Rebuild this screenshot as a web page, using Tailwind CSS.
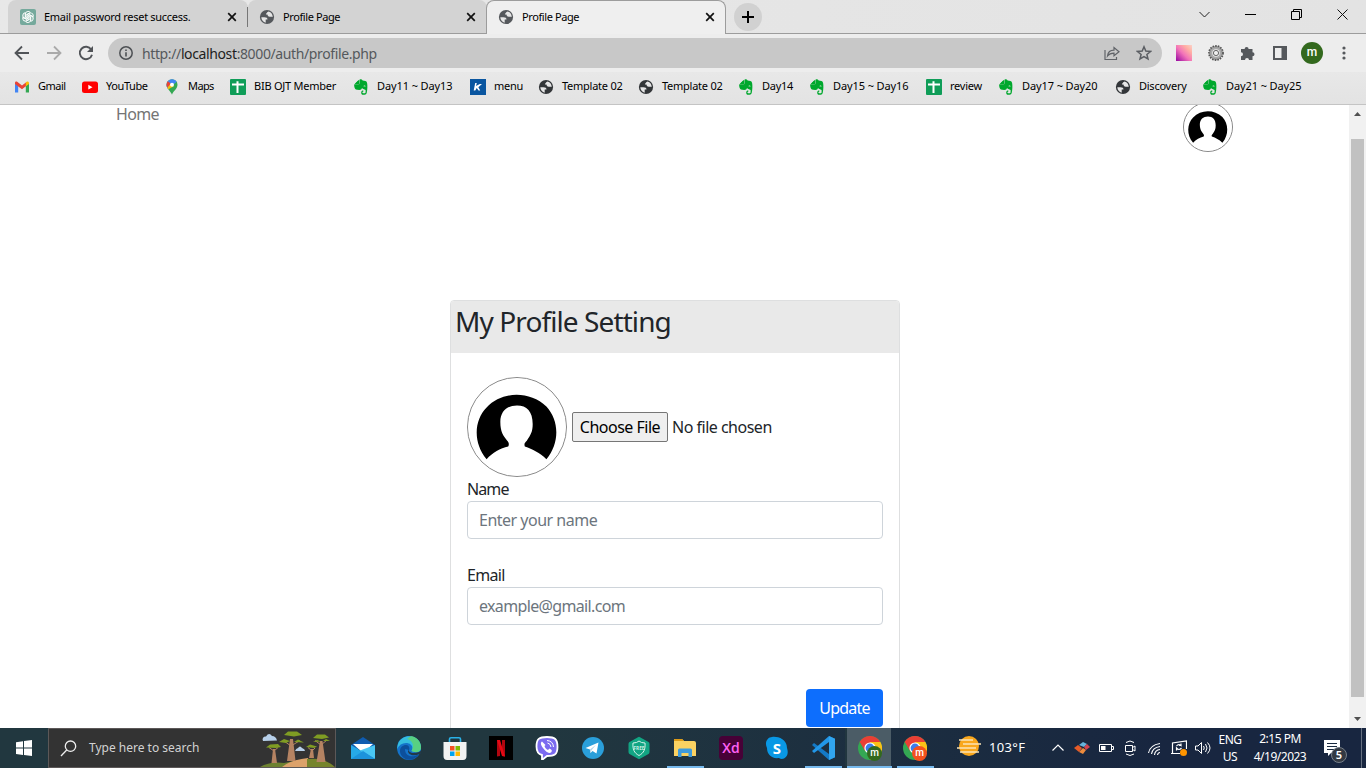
<!DOCTYPE html>
<html lang="en">
<head>
<meta charset="utf-8">
<title>Profile Page</title>
<script src="https://cdn.jsdelivr.net/npm/@tailwindcss/browser@4"></script>
</head>
<body class="w-[1366px] h-[768px] overflow-hidden flex flex-col bg-white font-['Noto_Sans','Open_Sans',sans-serif] text-[#212529]">
<svg class="hidden">
  <symbol id="globe" viewBox="0 0 16 16"><circle cx="8" cy="8" r="7.1" fill="currentColor"/><path d="M9.500 2.200C7.500 2.600 7.600 3.800 8.600 4.300L7.800 5.600 9.300 6.900C10.600 7.600 12 7.400 13.900 7.200 14 9.500 12.800 11.500 11 12.800 9.600 13.500 8.300 13.700 7.200 13.700L7 11.900C8 11 9.500 11.400 9.400 10 9.300 8.600 7.800 8.300 6.200 8.300H2.200C2 5.600 3.400 3.600 5.200 2.700 6.500 2.100 8 1.900 9.500 2.200Z" fill="#e6e6e6" opacity=".0"/><path d="M2.300 8.200H5.400C7.600 8.200 8.500 9 8.500 10.400H6.700V13.700C4.300 13.200 2.400 11 2.300 8.200ZM9.600 2.500C12.200 3.200 13.800 5.400 13.700 8 12.800 7.400 11.800 7.700 10.700 7.700 9.200 7.600 8.500 6.700 8.500 5.600H6.900C6.900 4 8.200 4 8.200 3.200Z" fill="#e6e6e6"/></symbol>
  <symbol id="ever" viewBox="0 0 16 16"><path d="M5.6.9V4.2Q5.6 4.8 5 4.8H1.9L5.6.9ZM6.4 1.3Q6.4.3 7.4.3C8.8.3 9.3.9 9.6 1.6L12.5 2Q14 2.2 14.2 4.6C14.5 7.4 14.5 10 13.8 13.6 13.5 15.3 12.7 15.8 11.6 15.8H10.3C8.8 15.8 8.2 14.8 8.2 13.7 8.2 12.2 9 11.6 10.3 11.6V12.8C9.6 12.8 9.4 13.2 9.4 13.6 9.4 14.1 9.7 14.3 10.3 14.3H11.5C12.3 14.3 12.6 13.8 12.6 13V11C12.4 10.4 9.6 10.4 9 9 8.7 10.3 8 10.9 6.3 10.9 3 10.9 2.1 10.3 1.6 8.7 1.2 7.3 1.1 6.4 1.2 5.5H5.2Q6.4 5.5 6.4 4.3Z" fill="#00a82d"/><path d="M1.200 5.600 6 1V5.600Z" fill="#00a82d"/><path d="M10.4 7.3c.2-1.2 2-1.2 2.2.2Z" fill="#e6e6e6"/></symbol>
  <symbol id="sheet" viewBox="0 0 16 16"><rect width="16" height="16" rx="1" fill="#0f9d58"/><path d="M2 5.5H14M7.5 2.2V14" stroke="#fff" stroke-width="2"/></symbol>
  <symbol id="close" viewBox="0 0 10 10"><path d="M1.2 1.2 8.8 8.8M8.8 1.2 1.2 8.8" stroke="#111" stroke-width="1.7"/></symbol>
  <symbol id="person" viewBox="0 0 100 100"><circle cx="50" cy="50" r="49.5" fill="#fff"/><path d="M19 83C5 66 6 43 19 30 35 13 63 13 80 29 93 43 94 66 80 83 73 76 66 73 58 70 57 67 58 66 60 64 64 58 66 55 66 47 66 34 60 28 50 28S33 34 33 45C33 55 36 59 40 64 42 66 42 68 41 70 33 72 25 76 19 83Z" fill="#000"/></symbol>
  <symbol id="chrome" viewBox="0 0 24 24"><circle cx="12" cy="12" r="12" fill="#34a853"/><path d="M12 12 1.6 6A12 12 0 0 1 22.4 6Z" fill="#ea3f35"/><path d="M12 6H22.4A12 12 0 0 1 12 24L17.2 15Z" fill="#fbc116"/><path d="M1.6 6 6.8 15 12 12 12 6Z" fill="#ea3f35"/><path d="M1.6 6 6.8 15 9 17 4 17Z" fill="#34a853"/><circle cx="12" cy="12" r="5.6" fill="#fff"/><circle cx="12" cy="12" r="4.4" fill="#3b7ded"/></symbol>
</svg>

<!-- Tab strip -->
<header class="h-[34px] shrink-0 flex bg-linear-to-r from-[#e8e8e8] to-[#e3e3e3] text-[11px] text-black relative border-b border-[#9c9c9c]">
  <div class="ml-2 w-[240px] h-[33px] bg-[#d3d3d3] rounded-t-lg flex items-center pl-3 pr-[11px] pt-px">
    <svg class="size-4 shrink-0" viewBox="0 0 16 16"><rect width="16" height="16" rx="2" fill="#75a99c"/><g fill="none" stroke="#fff" stroke-width=".9"><path id="petal" d="M5.4 8.8V5.2Q5.4 2.6 8 2.4 9.6 2.4 10.3 3.5L7 5.4V8.8"/><use href="#petal" transform="rotate(60 8 8)"/><use href="#petal" transform="rotate(120 8 8)"/><use href="#petal" transform="rotate(180 8 8)"/><use href="#petal" transform="rotate(240 8 8)"/><use href="#petal" transform="rotate(300 8 8)"/></g></svg>
    <span class="ml-2 flex-1 whitespace-nowrap tracking-[-0.3px]">Email password reset success.</span>
    <svg class="size-[10px]"><use href="#close"/></svg>
  </div>
  <div class="w-[239px] h-[33px] bg-[#d3d3d3] rounded-t-lg flex items-center pl-[11px] pr-[11px] pt-px">
    <svg class="size-4 text-[#55585c]"><use href="#globe"/></svg>
    <span class="ml-2 flex-1 tracking-[-0.4px]">Profile Page</span>
    <svg class="size-[10px]"><use href="#close"/></svg>
  </div>
  <i class="absolute left-[247px] top-[7px] w-px h-5 bg-[#777]"></i>
  <div class="-ml-[1px] w-[240px] h-[34px] bg-[#efefef] rounded-t-lg border border-b-0 border-[#9c9c9c] flex items-center pl-[11px] pr-[10px] pb-px">
    <svg class="size-4 text-[#55585c]"><use href="#globe"/></svg>
    <span class="ml-2 flex-1 tracking-[-0.4px]">Profile Page</span>
    <svg class="size-[10px]"><use href="#close"/></svg>
  </div>
  <div class="ml-2 mt-[3px] size-7 rounded-full bg-[#d1d1d1] flex items-center justify-center"><svg class="size-3" viewBox="0 0 12 12"><path d="M6 0V12M0 6H12" stroke="#000" stroke-width="2"/></svg></div>
  <div class="ml-auto flex items-center pr-[18px] pb-[5px] gap-[35px]">
    <svg class="size-[11px]" viewBox="0 0 11 11" fill="none" stroke="#222"><path d="M.5 3 5.5 8 10.5 3"/></svg>
    <svg class="size-[11px]" viewBox="0 0 11 11" stroke="#000"><path d="M0 5.500H11"/></svg>
    <svg class="size-[11px]" viewBox="0 0 11 11" fill="none" stroke="#000"><path d="M.5 2.500H8.500V10.500H.5ZM2.500 2.500V.5H10.500V8.500H8.500"/></svg>
    <svg class="size-[11px]" viewBox="0 0 11 11" stroke="#111"><path d="M.5.5 10.500 10.500M10.500.5.5 10.500"/></svg>
  </div>
</header>

<!-- Toolbar -->
<div class="h-[38px] shrink-0 flex items-center bg-[#ededed] pl-[14px] pr-[13px]">
  <svg class="size-4" viewBox="0 0 16 16" fill="none" stroke="#515458" stroke-width="1.8"><path d="M15 8H2M8 1.500 1.500 8 8 14.500"/></svg>
  <svg class="size-4 ml-4" viewBox="0 0 16 16" fill="none" stroke="#aaa" stroke-width="1.800"><path d="M1 8H14M8 1.500 14.500 8 8 14.500"/></svg>
  <svg class="size-4 ml-4" viewBox="0 0 16 16"><path d="M13.200 4.500A6.200 6.200 0 1 0 14 9.700" fill="none" stroke="#515458" stroke-width="1.900"/><path d="M15 1V7H9Z" fill="#515458"/></svg>
  <div class="ml-[14px] w-[1054px] h-[30px] rounded-full bg-[#c8c8c8] flex items-center pl-[11px] pr-[10px]">
    <svg class="size-[14px]" viewBox="0 0 14 14"><circle cx="7" cy="7" r="6.200" fill="none" stroke="#4d5054" stroke-width="1.500"/><path d="M7 6.200V10.500M7 3.500V5" stroke="#4d5054" stroke-width="1.600"/></svg>
    <span class="ml-[9px] text-[14px] text-[#55585c] flex-1 tracking-[-0.38px]">http://<span class="text-[#1d1e20]">localhost</span>:8000/auth/profile.php</span>
    <svg class="size-4 mr-4" viewBox="0 0 16 16" fill="none" stroke="#606368" stroke-width="1.200"><path d="M1 5V14.500H12.500V12M3.500 11C4 7 6.500 5.200 10 5.200V2.500L15 6.700 10 10.800V8.200C7 8.200 5 9 3.500 11Z"/></svg>
    <svg class="size-4" viewBox="0 0 16 16" fill="none" stroke="#5b5e63" stroke-width="1.500"><path d="M8 1.800 9.800 6.100 14.500 6.500 10.900 9.500 12 14 8 11.600 4 14 5.100 9.500 1.500 6.500 6.200 6.100Z"/></svg>
  </div>
  <div class="ml-[14px] size-4 bg-[linear-gradient(45deg,#a012a4_5%,#f374b9_45%,#ffb0a4_75%,#fad2c9)]"></div>
  <svg class="size-4 ml-4" viewBox="0 0 16 16" fill="none"><circle cx="8" cy="8" r="7" stroke="#555" stroke-width="1.800" stroke-dasharray="1.600 1.060"/><circle cx="8" cy="8" r="5" stroke="#aaa" stroke-width="2.600" fill="#eee"/><circle cx="8" cy="8" r="6.400" stroke="#555" stroke-width=".6"/><circle cx="8" cy="8" r="2.600" stroke="#666"/></svg>
  <svg class="size-4 ml-4" viewBox="0 0 16 16" fill="#55585c"><path d="M1 4H4.600A2 2 0 1 1 8.600 4H12.500V7.200A2 2 0 1 1 12.500 11.200V15H9A2 2 0 0 0 5 15H1V11.300A2 2 0 0 0 1 7.300Z"/></svg>
  <svg class="size-4 ml-4" viewBox="0 0 16 16"><path d="M1 1H15V15H1ZM3 3V13H9.500V3Z" fill="#55585c" fill-rule="evenodd"/></svg>
  <div class="ml-[13px] size-[22px] rounded-full bg-[#33691e] text-white text-[12px] leading-[20px] text-center font-['Roboto'] font-medium">m</div>
  <svg class="w-1 h-[14px] ml-[19px]" viewBox="0 0 4 14" fill="#55585c"><circle cx="2" cy="2" r="1.600"/><circle cx="2" cy="7" r="1.600"/><circle cx="2" cy="12" r="1.600"/></svg>
</div>

<!-- Bookmarks -->
<nav class="h-[33px] shrink-0 bg-linear-to-b from-[#e8e8e8] to-[#e3e3e3] border-b border-[#c4c4c4] pl-[14px] pb-[3px] grid grid-cols-[68px_82px_66px_123px_117px_68px_100px_100px_71px_117px_72px_117px_87px_110px] items-center text-[11px] text-black tracking-[-0.25px] whitespace-nowrap [&>a]:flex [&>a]:items-center [&>a]:gap-2 [&_svg]:size-4 [&_svg]:shrink-0">
  <a class="tracking-[-0.5px]"><svg viewBox="0 0 16 16"><path d="M1 13.500V4.500L4.200 6.800V13.500Z" fill="#4285f4"/><path d="M11.800 13.500V6.800L15 4.500V13.500Z" fill="#34a853"/><path d="M1 5V4C1 2.500 2.500 2.200 3.500 3L8 6.400 12.200 3.200V7L8 10.200 3.600 7Z" fill="#ea4335"/><path d="M11.800 3.400C13 2 15 2.500 15 4.200V5L11.800 7.300Z" fill="#fbbc04"/></svg>Gmail</a>
  <a class="tracking-[-0.4px]"><svg viewBox="0 0 16 16"><rect y="2.500" width="16" height="11.500" rx="2.500" fill="#f00"/><path d="M6.300 5.800 10.500 8.200 6.300 10.600Z" fill="#fff"/></svg>YouTube</a>
  <a class="tracking-[-0.6px]"><svg viewBox="0 0 16 16"><path d="M8 15.800C7.500 13 2.500 10 2.500 5.700A5.500 5.500 0 0 1 13.500 5.700C13.500 10 8.600 12.500 8 15.800Z" fill="#34a853"/><path d="M3.800 2.200A5.500 5.500 0 0 1 12.700 2.800L4.200 10C3.200 8.700 2.500 7.500 2.500 5.700Z" fill="#4285f4"/><path d="M3.800 2.200 7 4.800 3.200 8.500C2.300 6.500 2.200 4 3.800 2.200Z" fill="#ea4335"/><path d="M9.800 7.200 4.300 10.200 3.300 8.700 6.500 4.900Z" fill="#fbbc04"/><circle cx="8" cy="5.700" r="2" fill="#fff"/></svg>Maps</a>
  <a><svg><use href="#sheet"/></svg>BIB OJT Member</a>
  <a class="tracking-[-0.1px]"><svg><use href="#ever"/></svg>Day11 ~ Day13</a>
  <a><svg viewBox="0 0 16 16"><rect width="16" height="16" fill="#0a56a0"/><path d="M5.200 4H6.800L6 7 9.800 5H12L8.400 8.200 10.200 11.500H8.500L6.700 9 5.300 11.500H3.700Z" fill="#fff"/></svg>menu</a>
  <a><svg class="text-[#333639]"><use href="#globe"/></svg>Template 02</a>
  <a><svg class="text-[#333639]"><use href="#globe"/></svg>Template 02</a>
  <a><svg><use href="#ever"/></svg>Day14</a>
  <a class="tracking-[-0.1px]"><svg><use href="#ever"/></svg>Day15 ~ Day16</a>
  <a><svg><use href="#sheet"/></svg>review</a>
  <a class="tracking-[-0.1px]"><svg><use href="#ever"/></svg>Day17 ~ Day20</a>
  <a><svg class="text-[#333639]"><use href="#globe"/></svg>Discovery</a>
  <a class="tracking-[-0.1px]"><svg><use href="#ever"/></svg>Day21 ~ Day25</a>
</nav>

<!-- Page -->
<div class="h-[623px] shrink-0 flex overflow-hidden">
  <main class="flex-1 h-full overflow-hidden flex flex-col">
    <div class="h-[195px] shrink-0 flex justify-between items-start pl-[116px] pr-[116px]">
      <a class="text-[16px] leading-[18px] text-[#747474] tracking-[-0.7px]">Home</a>
      <svg class="size-[50px] -mt-[3px] rounded-full border border-[#888]" viewBox="0 0 100 100"><use href="#person"/></svg>
    </div>
    <section class="ml-[450px] w-[450px] h-[500px] shrink-0 border border-[#dedfe0] rounded-[4px] overflow-hidden">
      <h1 class="h-[52px] bg-[#e9e9e9] pl-[4px] pt-[3px] text-[28px] leading-[34px] tracking-[-0.9px] whitespace-nowrap">My Profile Setting</h1>
      <form class="px-4 pt-6 flex flex-col text-[16px] leading-6 tracking-[-0.5px]">
        <div class="flex items-center">
          <svg class="size-[100px] rounded-full border border-[#888]" viewBox="0 0 100 100"><use href="#person"/></svg>
          <span class="ml-[5px] w-24 h-[30px] border border-[#767676] rounded-[2px] bg-[#efefef] text-black flex items-center justify-center whitespace-nowrap">Choose File</span>
          <span class="ml-1 whitespace-nowrap">No file chosen</span>
        </div>
        <label class="tracking-[-0.9px]">Name</label>
        <div class="h-[38px] border border-[#ced4da] rounded-[4px] px-[11px] flex items-center text-[#6c757d]">Enter your name</div>
        <label class="mt-6 tracking-[-0.7px]">Email</label>
        <div class="h-[38px] border border-[#ced4da] rounded-[4px] px-[11px] flex items-center text-[#6c757d] tracking-[-0.65px]">example@gmail.com</div>
        <div class="mt-16 self-end w-[77px] h-[38px] rounded-[4px] bg-[#0d6efd] text-white flex items-center justify-center tracking-[-0.8px]">Update</div>
      </form>
    </section>
  </main>
  <div class="w-[17px] bg-[#f1f1f1] flex flex-col items-center py-[7px]">
    <svg class="w-[7px] h-1" viewBox="0 0 7 4"><path d="M0 4 3.500 0 7 4Z" fill="#505050"/></svg>
    <div class="mt-[23px] w-[13px] h-[558px] bg-[#c1c1c1]"></div>
    <svg class="w-[7px] h-1 mt-5" viewBox="0 0 7 4"><path d="M0 0 3.500 4 7 0Z" fill="#505050"/></svg>
  </div>
</div>

<!-- Taskbar -->
<footer class="h-10 shrink-0 flex bg-linear-to-r from-[#21373f] from-40% to-[#182640] to-85% text-white">
  <div class="w-12 flex items-center justify-center"><svg class="size-4" viewBox="0 0 16 16" fill="#fff"><path d="M0 2.200 7 1.200V7.600H0ZM8 1.100 16 0V7.600H8ZM0 8.500H7V14.900L0 13.900ZM8 8.500H16V16L8 14.900Z"/></svg></div>
  <div class="w-[288px] bg-[#333] border border-[#5c5858] flex items-center pl-[11px] text-[12px] text-[#d2d2d2]">
    <svg class="size-[17px]" viewBox="0 0 17 17" fill="none" stroke="#eee" stroke-width="1.300"><circle cx="10.500" cy="6.200" r="5.200"/><path d="M6.700 10 1 16"/></svg>
    <span class="ml-3 flex-1">Type here to search</span>
    <svg class="w-[75px] h-[38px]" viewBox="0 0 75 38"><path d="M0 38Q10 32 24 34L40 31V38Z" fill="#6d8130"/><path d="M22 38Q30 31 48 29L50 38Z" fill="#dca26a"/><path d="M47 38 47 30Q64 28 75 38Z" fill="#76842c"/><g fill="#b58362"><path d="M11.500 34 13 20H15L17 34ZM27 32 30 10H33L35.500 32ZM49 29 51 20H53L54 29ZM56.500 33 60 12H62.500L65.500 33Z"/></g><g fill="none" stroke="#b58362"><path d="M9 18.500 14 22 18 18.500M24 12 31 17 40 11.500M55 11.500 61 16 67 11M48 18.500 52 22 55 19"/></g><g fill="#7f9c23"><path d="M6 18.500 10 15.500 18 15 21 18 16 19ZM24 6 28 2.500 37 2.500 42 6 34 7.500ZM19 13 24 10 30 12 26 14ZM34 13 38 10.500 44 13.500ZM46 18 50 15.500 57 17.500 54 19ZM53 9 57 5.500 65 5.500 69 8.500 62 10ZM53 13 57 11 61 12.500ZM63 12 66 10 70 12Z"/></g><path d="M3 12A3 3 0 0 1 6 7.500Q9 3 12 7 16 7 17 11.500Z" fill="#b7d0ea"/><path d="M35 22Q36 19.500 38 19 40 16 42 19 45 20 45 22Z" fill="#b7d0ea"/></svg>
  </div>
  <div class="ml-[3px] flex [&>div]:w-[46px] [&>div]:flex [&>div]:items-center [&>div]:justify-center [&>div]:relative [&>div>svg]:size-6 [&>div>svg]:ml-px">
    <div><svg viewBox="0 0 24 24"><path d="M0 9 12 1 24 9V13H0Z" fill="#0f5cb0"/><path d="M2 8H22L12 17Z" fill="#fff"/><path d="M0 9 24 23H0Z" fill="#26a9e8"/><path d="M24 9V23L9 14.500Z" fill="#49c7f4"/><path d="M0 23 12 15 24 23Z" fill="#1c93dc"/></svg></div>
    <div><svg viewBox="0 0 24 24"><circle cx="12" cy="12" r="12" fill="#1473ca"/><path d="M1 8C5-3 22-2 24 10 25 17 18 17 14.500 15 17 11 14 7 9 7 5 7 2 9 0 13Z" fill="#35bddf"/><path d="M14 0C20 1 24 6 24 11 24 17 18 17 14.500 15 18 9 15 4 10 3Z" fill="#61d56a" opacity=".8"/><path d="M8 13C8 21 16 22 22 18 18 25 8 26 4 19 1 13 5 9 9 9 12 9 13 12 12 14Z" fill="#0c4f9c"/><path d="M11.500 13C11 17 17 18.500 24 15V18L22.500 18C17 20.500 11 19 11 15Z" fill="#22394a"/></svg></div>
    <div><svg viewBox="0 0 24 24"><path d="M6.500 7V3Q6.500 1.700 8 1.700H16Q17.500 1.700 17.500 3V7" fill="none" stroke="#2ab2e8" stroke-width="1.600"/><path d="M.5 6H23.500V20Q23.500 24 20 24H4Q.5 24 .5 20Z" fill="#f2f2f2"/><path d="M7 10H11.500V14.500H7Z" fill="#f25022"/><path d="M12.500 10H17V14.500H12.500Z" fill="#7fba00"/><path d="M7 15.500H11.500V20H7Z" fill="#00a4ef"/><path d="M12.500 15.500H17V20H12.500Z" fill="#ffb900"/></svg></div>
    <div><svg viewBox="0 0 24 24"><path d="M0 0H24V24H0Z"/><path d="M8 4H11V20L8 20.500ZM13 4H16V20.500L13 20Z" fill="#b1060f"/><path d="M8 4H11L16 20.500 13 20Z" fill="#e50914"/></svg></div>
    <div><svg viewBox="0 0 24 24"><path d="M12 1C20 1 22.500 3 22.500 11S19 20 12 20L7 24V19C2.500 18 1.500 15 1.500 10.500 1.500 3 4 1 12 1Z" fill="#7b6bf0" stroke="#fff" stroke-width="1.800"/><path d="M7 5.500C5 7 6 9 8 12 10 15 13 17 15 17 17 16 17.500 14.500 16 13.500L14.500 12.500 13 14C11 13 9.800 11.500 9.500 10L10.500 9Z" fill="#fff"/><path d="M12.500 7Q15.500 7.500 16 11M12 4.500Q18 5 18.500 11" fill="none" stroke="#fff"/></svg></div>
    <div><svg viewBox="0 0 24 24"><circle cx="12" cy="12" r="11" fill="#2a9fda"/><path d="M4.500 12 17.500 6.500 15.500 17.500 11.500 15 9.500 17 9 13.500Z" fill="#fff"/><path d="M9 13.500 15 8.800 10.500 14.300 9.500 17Z" fill="#b2d5e9"/></svg></div>
    <div><svg viewBox="0 0 24 24"><path d="M11 1.200Q12 .5 13 1.200L21.500 6Q22.500 6.500 22.500 8V16Q22.500 17.500 21.500 18L13 22.800Q12 23.500 11 22.800L2.500 18Q1.500 17.500 1.500 16V8Q1.500 6.500 2.500 6Z" fill="#12a583"/><path d="M6 7Q10 7 12 5 14 7 18 7C18.500 13 17 17 12 19.500 7 17 5.500 13 6 7Z" fill="none" stroke="#d7f3ec"/><text x="12" y="14" font-size="4.700" font-weight="700" text-anchor="middle" fill="#c9eee5">FREE</text></svg></div>
    <div><svg viewBox="0 0 24 24"><path d="M1 3H9L11 5H21Q23 5 23 7V20H1Z" fill="#fbd262"/><path d="M1 3H9L11 5H1Z" fill="#dd9b18"/><path d="M5 21V14Q5 12.500 6.500 12.500H17.500Q19 12.500 19 14V21H15.500V17H8.500V21Z" fill="#3f9bdc"/></svg><i class="absolute bottom-0 left-[6px] w-[37px] h-[2px] bg-[#76b9ed]"></i></div>
    <div><svg viewBox="0 0 24 24"><rect width="24" height="24" rx="4" fill="#470137"/><text x="12" y="16.800" font-size="14" font-family="Open Sans" font-weight="600" text-anchor="middle" fill="#ff61f6">Xd</text></svg></div>
    <div><svg viewBox="0 0 24 24"><path d="M7 1C11 0 22 2 22 12 25 21 18 25 14 22 6 23 2 18 2 12-1 6 3 1 7 1Z" fill="#0998e5"/><text x="12" y="17.500" font-size="15" font-family="Open Sans" font-weight="700" text-anchor="middle" fill="#fff">S</text></svg></div>
    <div><svg viewBox="0 0 24 24"><path d="M18 0 24 2.800V21.200L18 24 1 9 3 7 18 18Z" fill="#1479c5"/><path d="M18 0V6L3 17 1 15Z" fill="#2297e8"/><path d="M18 0 24 2.800V21.200L18 24Z" fill="#31a5ef"/></svg><i class="absolute bottom-0 left-[6px] w-[37px] h-[2px] bg-[#76b9ed]"></i></div>
    <div class="bg-[#4b5c66] border-l-2 border-[#21363f]"><svg><use href="#chrome"/></svg><b class="absolute left-[20px] top-[18px] size-[15px] rounded-full bg-[#33691e] text-[10px] leading-[13px] text-center font-medium font-['Roboto']">m</b><i class="absolute bottom-0 left-0 w-[45px] h-[2px] bg-[#76b9ed]"></i></div>
    <div><svg><use href="#chrome"/></svg><b class="absolute left-[21px] top-[18px] size-[15px] rounded-full bg-[#f4511e] text-[10px] leading-[13px] text-center font-medium font-['Roboto']">m</b><i class="absolute bottom-0 left-[6px] w-[37px] h-[2px] bg-[#76b9ed]"></i></div>
  </div>
  <div class="ml-5 w-[90px] flex items-center text-[13px] tracking-[0.35px] -mt-px"><svg class="w-6 h-[22px] mr-2 shrink-0 -mt-1" viewBox="0 0 24 22"><circle cx="12" cy="11" r="10" fill="#f9a71c"/><path d="M2 5H16M6 9H24M0 13H19M3 17H22" stroke="#fbe4b4" stroke-width="1.600"/></svg>103°F</div>
  <div class="flex items-center gap-2 ml-[3px] [&_svg]:size-4">
    <svg viewBox="0 0 16 16" fill="none" stroke="#fff" stroke-width="1.200"><path d="M2.500 10.500 8 5 13.500 10.500"/></svg>
    <svg viewBox="0 0 16 16"><path d="M5 5 9 2 13 4 10 7Z" fill="#66b4dc"/><path d="M0 8 4 5 8 8 5 12Z" fill="#e65b28"/><path d="M10 7 13 4 16 7 12 10Z" fill="#d34450"/><path d="M5 12 9 8 12 10 9 14Z" fill="#ed8b3d"/></svg>
    <svg viewBox="0 0 16 16"><path d="M1.500 4.500H13.500V11.500H1.500ZM14 6.500H15.500V9.500H14" fill="none" stroke="#fff"/><path d="M3 6H7.500V10H3Z" fill="#fff"/></svg>
    <svg viewBox="0 0 16 16" fill="none" stroke="#fff"><path d="M3.500 5.500H10.500V11.500H3.500ZM10.500 7.500 13 6V11L10.500 9.500M4 2.500Q8-.5 12 2.500M4 14Q8 17 12 14"/></svg>
    <svg class="ml-px" viewBox="0 0 16 16" fill="none" stroke="#fff"><path d="M1.500 13Q3 5 13 3.500M4.500 14Q5.500 7.500 13 6.500M7.500 15Q8 10 13 9.500M10.500 15Q11 12.500 13 12.500" stroke-width="1.100"/></svg>
    <svg viewBox="0 0 16 16"><path d="M0 13.500H9M1.500 13V3L15.500 1V9M5.500 6Q7.500 3.500 10 5.500V3.500M10 5.500H8M10.500 8Q8 11 5.500 8V10.500" fill="none" stroke="#fff" stroke-width="1.200"/><circle cx="12.500" cy="12.500" r="3.500" fill="#ff9500"/></svg>
    <svg viewBox="0 0 16 16" fill="none" stroke="#fff"><path d="M.5 6H3L6.500 2.500V13.500L3 10H.5ZM8.500 6Q10 8 8.500 10M10.500 4Q13.500 8 10.500 12M12.500 2.500Q17.500 8 12.500 13.500"/></svg>
  </div>
  <div class="ml-[6px] w-[26px] text-[12px] leading-[17px] pt-[3px] text-center tracking-[-0.5px]">ENG<br>US</div>
  <div class="ml-[7px] w-[60px] text-[12px] leading-[18px] pt-[2px] text-center whitespace-nowrap tracking-[-0.5px]">2:15 PM<br>4/19/2023</div>
  <div class="ml-[14px] pt-[12px] relative w-6"><svg class="w-4 h-[17px]" viewBox="0 0 16 17"><path d="M0 0H16V13H7L4 16V13H0Z" fill="#fff"/><path d="M3 3.500H13M3 6.500H13M3 9.500H10" stroke="#1a2a40"/></svg><b class="absolute left-[7px] top-[19px] size-4 rounded-full bg-[#333942] border border-[#77808a] text-[11px] leading-[14px] text-center font-semibold">5</b></div>
  <i class="ml-auto mr-1 w-px h-10 bg-[#667080]"></i>
</footer>
</body>
</html>
